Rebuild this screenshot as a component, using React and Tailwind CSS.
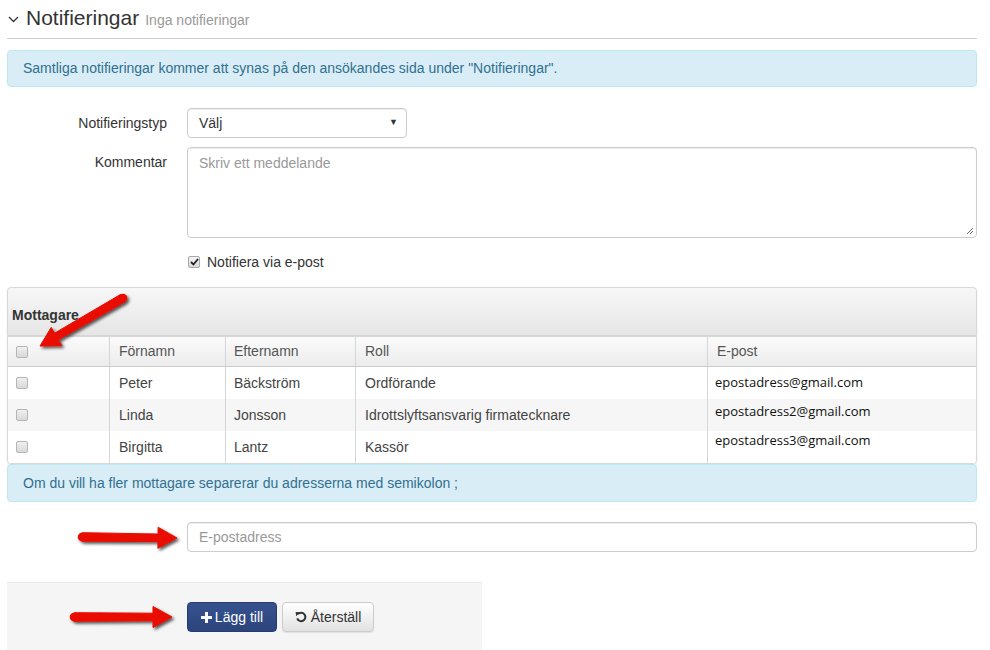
import React from "react";

function arrowPoints(tx, ty, hx, hy, headLen, headHalf, shaftHalfTail, shaftHalfHead) {
  const dx = hx - tx, dy = hy - ty;
  const len = Math.sqrt(dx * dx + dy * dy);
  const ux = dx / len, uy = dy / len;
  const px = -uy, py = ux;
  const bx = hx - ux * headLen, by = hy - uy * headLen;
  const pts = [
    [tx + px * shaftHalfTail, ty + py * shaftHalfTail],
    [bx + px * shaftHalfHead, by + py * shaftHalfHead],
    [bx + px * headHalf, by + py * headHalf],
    [hx, hy],
    [bx - px * headHalf, by - py * headHalf],
    [bx - px * shaftHalfHead, by - py * shaftHalfHead],
    [tx - px * shaftHalfTail, ty - py * shaftHalfTail],
  ];
  return pts.map((p) => p.map((v) => v.toFixed(1)).join(",")).join(" ");
}

function Arrows() {
  const arrows = [
    { t: [123, 298], h: [40, 346] },
    { t: [82, 537], h: [177, 538] },
    { t: [74, 617], h: [172, 617] },
  ];
  return (
    <svg className="absolute left-0 top-0 pointer-events-none" width="990" height="650">
      <defs>
        <filter id="sh" x="-20%" y="-50%" width="140%" height="200%">
          <feDropShadow dx="2" dy="2" stdDeviation="1.6" floodColor="#000" floodOpacity="0.65" />
        </filter>
      </defs>
      {arrows.map((a, i) => (
        <g key={i} filter="url(#sh)">
          <circle cx={a.t[0]} cy={a.t[1]} r="4.3" fill="#e80a05" />
          <polygon
            points={arrowPoints(a.t[0], a.t[1], a.h[0], a.h[1], 19, 10.5, 4.3, 3.8)}
            fill="#e80a05"
            strokeLinejoin="round"
            stroke="#e80a05"
            strokeWidth="1"
          />
        </g>
      ))}
    </svg>
  );
}

function GrayBox() {
  return (
    <span className="inline-block w-[12px] h-[12px] rounded-[2px] border border-[#b5b5b5] bg-gradient-to-b from-[#f0f0f0] to-[#d8d8d8] align-middle" />
  );
}

const rows = [
  { f: "Peter", e: "Bäckström", r: "Ordförande", m: "epostadress@gmail.com", pt: "pt-[6px]", bg: "bg-white" },
  { f: "Linda", e: "Jonsson", r: "Idrottslyftsansvarig firmatecknare", m: "epostadress2@gmail.com", pt: "pt-[3px]", bg: "bg-[#f6f6f6]" },
  { f: "Birgitta", e: "Lantz", r: "Kassör", m: "epostadress3@gmail.com", pt: "pt-[0px]", bg: "bg-white" },
];

export default function App() {
  return (
    <div className="relative w-[990px] h-[650px] overflow-hidden bg-white text-[14px] text-[#333] font-['Liberation_Sans',Arial,sans-serif]">
      <div className="pl-[7px] pr-[13px]">
        {/* header */}
        <div className="h-[39px] border-b border-[#cfcfcf] flex items-start pt-[6px]">
          <svg className="mt-[10px] ml-[1px] mr-[7px]" width="11" height="7" viewBox="0 0 11 7">
            <path d="M1 1 L5.5 5.5 L10 1" fill="none" stroke="#333" strokeWidth="1.3" />
          </svg>
          <span className="text-[21px] leading-[24px] text-[#333]">Notifieringar</span>
          <span className="ml-[6px] text-[14px] leading-[24px] pt-[2px] text-[#999]">Inga notifieringar</span>
        </div>

        {/* alert */}
        <div className="mt-[11px] h-[37px] rounded-[4px] border border-[#bce8f1] bg-[#d9edf7] text-[#31708f] px-[15px] flex items-center">
          Samtliga notifieringar kommer att synas på den ansökandes sida under "Notifieringar".
        </div>

        {/* form */}
        <div className="mt-[21px] grid grid-cols-[160px_1fr] gap-x-[20px]">
          <div className="text-right h-[30px] leading-[30px]">Notifieringstyp</div>
          <div>
            <div className="w-[220px] h-[30px] rounded-[4px] border border-[#ccc] bg-white flex items-center justify-between pl-[11px] pr-[8px] shadow-[inset_0_1px_1px_rgba(0,0,0,0.075)]">
              <span>Välj</span>
              <span className="text-[9px] text-[#333]">▼</span>
            </div>
          </div>

          <div className="text-right mt-[9px] pt-[7px] leading-[16px]">Kommentar</div>
          <div className="mt-[9px] relative h-[91px] rounded-[4px] border border-[#ccc] bg-white shadow-[inset_0_1px_1px_rgba(0,0,0,0.075)] px-[11px] pt-[5px] text-[#999]">
            Skriv ett meddelande
            <svg className="absolute right-[2px] bottom-[2px]" width="8" height="8" viewBox="0 0 8 8">
              <path d="M7 1 L1 7 M7 4 L4 7" stroke="#666" strokeWidth="1" />
            </svg>
          </div>

          <div />
          <div className="mt-[14px] h-[20px] flex items-center">
            <span className="ml-[1px] relative inline-flex items-center justify-center w-[12px] h-[12px] rounded-[2px] border border-[#a8a8a8] bg-gradient-to-b from-[#f4f4f4] to-[#dadada]">
              <svg width="9" height="8" viewBox="0 0 9 8">
                <path d="M1 4 L3.5 6.5 L8 1" fill="none" stroke="#222" strokeWidth="1.8" />
              </svg>
            </span>
            <span className="ml-[7px]">Notifiera via e-post</span>
          </div>
        </div>

        {/* panel */}
        <div className="mt-[15px]">
          <div className="h-[49px] rounded-t-[4px] border border-[#d8d8d8] bg-gradient-to-b from-[#f7f7f7] to-[#e6e6e6] flex items-center pl-[4px] pt-[8px] shadow-[0_1px_2px_rgba(0,0,0,0.1)]">
            <span className="font-bold text-[#333]">Mottagare</span>
          </div>
          <div className="rounded-b-[4px] border border-[#d8d8d8] shadow-[0_1px_2px_rgba(0,0,0,0.12)] overflow-hidden">
            <div className="grid grid-cols-[101px_116px_130px_352px_1fr] h-[30px] bg-gradient-to-b from-[#fbfbfb] to-[#ececec] border-b border-[#ccc] text-[#555]">
              <div className="flex items-center pl-[8px]"><GrayBox /></div>
              <div className="flex items-center pl-[9px] border-l border-[#d6d6d6]">Förnamn</div>
              <div className="flex items-center pl-[8px] border-l border-[#d6d6d6]">Efternamn</div>
              <div className="flex items-center pl-[9px] border-l border-[#d6d6d6]">Roll</div>
              <div className="flex items-center pl-[9px] border-l border-[#d6d6d6]">E-post</div>
            </div>
            {rows.map((r, i) => (
              <div key={i} className={"grid grid-cols-[101px_116px_130px_352px_1fr] h-[32px] text-[#444] " + r.bg}>
                <div className="flex items-center pl-[8px]"><GrayBox /></div>
                <div className="flex items-center pl-[9px] border-l border-[#d6d6d6]">{r.f}</div>
                <div className="flex items-center pl-[8px] border-l border-[#d6d6d6]">{r.e}</div>
                <div className="flex items-center pl-[9px] border-l border-[#d6d6d6]">{r.r}</div>
                <div className={"pl-[7px] border-l border-[#d6d6d6] font-['Open_Sans',sans-serif] text-[13px] leading-[18px] text-[#111] " + r.pt}>{r.m}</div>
              </div>
            ))}
          </div>
        </div>

        {/* alert 2 */}
        <div className="h-[38px] rounded-[4px] border border-[#bce8f1] bg-[#d9edf7] text-[#31708f] px-[15px] flex items-center">
          Om du vill ha fler mottagare separerar du adresserna med semikolon ;
        </div>

        {/* email input */}
        <div className="mt-[20px] pl-[180px]">
          <div className="h-[30px] rounded-[4px] border border-[#ccc] bg-white flex items-center px-[11px] text-[#999] shadow-[inset_0_1px_1px_rgba(0,0,0,0.075)]">
            E-postadress
          </div>
        </div>

        {/* footer */}
        <div className="mt-[30px] w-[475px] h-[80px] bg-[#f5f5f5] border-t border-[#e8e8e8] pt-[19px] pl-[180px] flex items-start gap-[5px]">
          <button className="h-[30px] w-[90px] rounded-[4px] bg-gradient-to-b from-[#36528f] to-[#2c447c] border border-[#263c6e] text-white flex items-center justify-center gap-[3px]">
            <svg width="11" height="11" viewBox="0 0 11 11">
              <path d="M4 0 H7 V4 H11 V7 H7 V11 H4 V7 H0 V4 H4 Z" fill="#fff" />
            </svg>
            <span>Lägg till</span>
          </button>
          <button className="h-[30px] w-[92px] rounded-[4px] bg-gradient-to-b from-[#ffffff] to-[#e2e2e2] border border-[#ccc] text-[#333] flex items-center justify-center gap-[4px] shadow-[0_1px_1px_rgba(0,0,0,0.08)]">
            <svg width="12" height="12" viewBox="0 0 12 12">
              <path d="M3 3.2 A4.2 4.2 0 1 1 2.2 7.4" fill="none" stroke="#333" strokeWidth="2" />
              <path d="M0.6 1 L5 1.2 L1.2 5.2 Z" fill="#333" />
            </svg>
            <span>Återställ</span>
          </button>
        </div>
      </div>
      <Arrows />
    </div>
  );
}
